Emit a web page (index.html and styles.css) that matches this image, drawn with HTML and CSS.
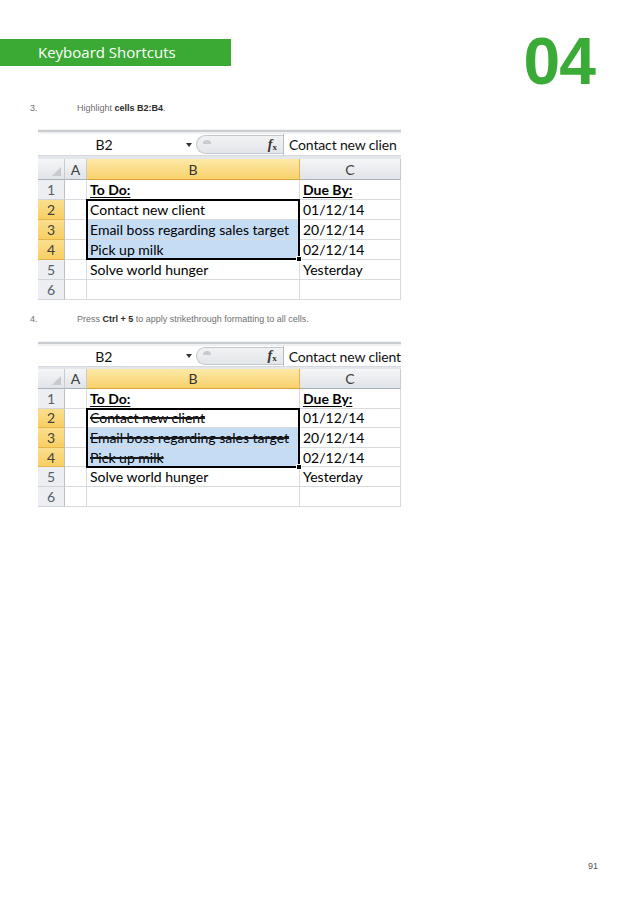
FILE: index.html
```html
<!DOCTYPE html>
<html>
<head>
<meta charset="utf-8">
<title>Keyboard Shortcuts 04</title>
<link rel="stylesheet" href="styles.css">
</head>
<body>
<div class="page">
  <header class="top">
    <div class="tag">Keyboard Shortcuts</div>
    <div class="chap">04</div>
  </header>

  <p class="step"><span class="num">3.</span><span>Highlight <b>cells B2:B4</b>.</span></p>

  <div class="shot">
    <div class="shot-top"></div>
    <div class="fbar">
      <div class="namebox"><span class="nb-text">B2</span><span class="nb-arrow"></span></div>
      <div class="pill"><span class="pill-dot"></span><span class="fx"><i>f</i><sub>x</sub></span></div>
      <div class="finput">Contact new clien</div>
    </div>
    <div class="shot-sep"></div>
    <div class="sheet">
      <div class="hd corner"><span class="tri"></span></div>
      <div class="hd">A</div>
      <div class="hd on">B</div>
      <div class="hd">C</div>

      <div class="rh">1</div><div class="c"></div><div class="c head">To Do:</div><div class="c head">Due By:</div>
      <div class="rh on">2</div><div class="c"></div><div class="c">Contact new client</div><div class="c">01/12/14</div>
      <div class="rh on">3</div><div class="c"></div><div class="c blue">Email boss regarding sales target</div><div class="c">20/12/14</div>
      <div class="rh on">4</div><div class="c"></div><div class="c blue">Pick up milk</div><div class="c">02/12/14</div>
      <div class="rh">5</div><div class="c"></div><div class="c">Solve world hunger</div><div class="c">Yesterday</div>
      <div class="rh">6</div><div class="c"></div><div class="c"></div><div class="c"></div>

      <div class="sel"><span class="handle"></span></div>
    </div>
  </div>

  <p class="step step2"><span class="num">4.</span><span>Press <b>Ctrl + 5</b> to apply strikethrough formatting to all cells.</span></p>

  <div class="shot shot2">
    <div class="shot-top"></div>
    <div class="fbar">
      <div class="namebox"><span class="nb-text">B2</span><span class="nb-arrow"></span></div>
      <div class="pill"><span class="pill-dot"></span><span class="fx"><i>f</i><sub>x</sub></span></div>
      <div class="finput">Contact new client</div>
    </div>
    <div class="shot-sep"></div>
    <div class="sheet">
      <div class="hd corner"><span class="tri"></span></div>
      <div class="hd">A</div>
      <div class="hd on">B</div>
      <div class="hd">C</div>

      <div class="rh">1</div><div class="c"></div><div class="c head">To Do:</div><div class="c head">Due By:</div>
      <div class="rh on">2</div><div class="c"></div><div class="c"><s>Contact new client</s></div><div class="c">01/12/14</div>
      <div class="rh on">3</div><div class="c"></div><div class="c blue"><s>Email boss regarding sales target</s></div><div class="c">20/12/14</div>
      <div class="rh on">4</div><div class="c"></div><div class="c blue"><s>Pick up milk</s></div><div class="c">02/12/14</div>
      <div class="rh">5</div><div class="c"></div><div class="c">Solve world hunger</div><div class="c">Yesterday</div>
      <div class="rh">6</div><div class="c"></div><div class="c"></div><div class="c"></div>

      <div class="sel"><span class="handle"></span></div>
    </div>
  </div>

  <footer class="foot">91</footer>
</div>
</body>
</html>
```

FILE: styles.css
```css
* { box-sizing: border-box; margin: 0; padding: 0; }
html, body { background: #fff; }
body {
  width: 638px;
  height: 903px;
  overflow: hidden;
  font-family: "Liberation Sans", Arial, sans-serif;
}
.page {
  display: flex;
  flex-direction: column;
  min-height: 903px;
}

/* header */
.top {
  display: flex;
  justify-content: space-between;
  align-items: flex-start;
  height: 94px;
}
.tag {
  margin-top: 39px;
  width: 231px;
  height: 27px;
  background: #3aaa35;
  color: #fff;
  font-family: "Open Sans", sans-serif;
  font-size: 15px;
  line-height: 27px;
  padding-left: 38px;
}
.chap {
  margin-top: 28px;
  margin-right: 43px;
  font-family: "Liberation Sans", Arial, sans-serif;
  font-size: 66px;
  font-weight: bold;
  line-height: 66px;
  color: #3aab36;
  letter-spacing: -1px;
}

/* steps */
.step {
  margin-top: 8px;
  display: flex;
  font-size: 9px;
  line-height: 12px;
  color: #707070;
  padding-left: 30px;
}
.step .num { width: 47px; }
.step b { color: #2a2a2a; }
.step2 { margin-top: 13px; }

/* screenshot */
.shot {
  margin: 15px 0 0 38px;
  width: 363px;
  overflow: hidden;
  font-family: Lato, "Open Sans", sans-serif;
}
.shot2 { margin-top: 16px; }
.shot-top {
  height: 5px;
  background: linear-gradient(#f2f3f5 0, #f2f3f5 1px, #c9cdd2 1px, #c9cdd2 3px, #eef0f2 3px);
}
.fbar {
  height: 22px;
  display: flex;
  background: #fff;
  border-bottom: 1px solid #d5d9de;
}
.namebox {
  width: 158px;
  display: flex;
  align-items: center;
  font-size: 14px;
  color: #111;
}
.nb-text {
  flex: 1;
  text-align: center;
  padding-right: 16px;
}
.nb-arrow {
  width: 0;
  height: 0;
  border-left: 3.5px solid transparent;
  border-right: 3.5px solid transparent;
  border-top: 4px solid #333;
  margin-right: 4px;
}
.pill {
  width: 87px;
  margin: 1px 0;
  display: flex;
  align-items: center;
  justify-content: space-between;
  background: linear-gradient(#f1f2f4, #e3e6e9);
  border: 1px solid #c3c8ce;
  border-right: none;
  border-radius: 11px 0 0 11px;
  padding: 0 6px 0 6px;
}
.pill-dot {
  width: 8px;
  height: 4px;
  border-radius: 4px 4px 0 0;
  background: #c7cbd0;
  margin-top: -6px;
}
.fx {
  font-family: "Liberation Serif", "Times New Roman", serif;
  font-weight: bold;
  font-size: 14px;
  color: #333;
}
.fx sub { font-size: 9px; vertical-align: -1px; }
.finput {
  flex: 1;
  border-left: 1px solid #b9bec4;
  padding-left: 5px;
  font-size: 14px;
  letter-spacing: -0.15px;
  line-height: 21px;
  color: #111;
  white-space: nowrap;
}
.shot-sep {
  height: 3px;
  background: #e3e6ea;
}

/* sheet grid */
.sheet {
  position: relative;
  display: grid;
  grid-template-columns: 27px 22px 213px 101px;
  grid-template-rows: 21px repeat(6, 20px);
  font-size: 14px;
  color: #000;
}
.hd {
  display: flex;
  align-items: center;
  justify-content: center;
  background: linear-gradient(#f5f6f8, #e1e4e8);
  border-right: 1px solid #c7cbd1;
  border-bottom: 1px solid #a8b0ba;
  color: #3c3c3c;
  font-size: 14px;
}
.hd.on {
  background: linear-gradient(#fde9a8, #f8d16b);
  border-right-color: #e1b34a;
  border-bottom-color: #d9a53a;
  color: #333;
}
.corner { position: relative; }
.tri {
  position: absolute;
  right: 3px;
  bottom: 3px;
  width: 0;
  height: 0;
  border-left: 9px solid transparent;
  border-bottom: 9px solid #c6cacf;
}
.rh {
  display: flex;
  align-items: center;
  justify-content: center;
  background: #eceef1;
  border-right: 1px solid #b9c0c9;
  border-bottom: 1px solid #d0d5db;
  color: #55606d;
  font-size: 14px;
}
.rh.on {
  background: linear-gradient(#fbdf8e, #f7cf63);
  border-bottom-color: #e5b44c;
  color: #404040;
}
.c {
  display: flex;
  align-items: center;
  padding-left: 3px;
  border-right: 1px solid #d8dadd;
  border-bottom: 1px solid #d8dadd;
  white-space: nowrap;
}
.c.head {
  font-weight: bold;
  text-decoration: underline;
  text-decoration-thickness: 1px;
  text-underline-offset: 2px;
}
.c.blue { background: #c5dcf5; }
.c s {
  text-decoration: line-through;
  text-decoration-thickness: 1.5px;
  text-decoration-color: #1a1a1a;
}
.sel {
  position: absolute;
  left: 48px;
  top: 40px;
  width: 214px;
  height: 61px;
  border: 2px solid #000;
  pointer-events: none;
}
.handle {
  position: absolute;
  right: -4px;
  bottom: -4px;
  width: 6px;
  height: 6px;
  background: #000;
  border: 1px solid #fff;
}

/* second screenshot slightly smaller */
.shot2 .fbar { height: 21px; }
.shot2 .shot-sep { height: 2px; }
.shot2 .sheet { grid-template-rows: 20px repeat(6, 19.6px); }
.shot2 .sel { top: 38.6px; height: 60.8px; }

/* footer */
.foot {
  margin-top: auto;
  padding: 0 40px 31px 0;
  text-align: right;
  font-size: 9px;
  line-height: 12px;
  color: #555;
}
```
